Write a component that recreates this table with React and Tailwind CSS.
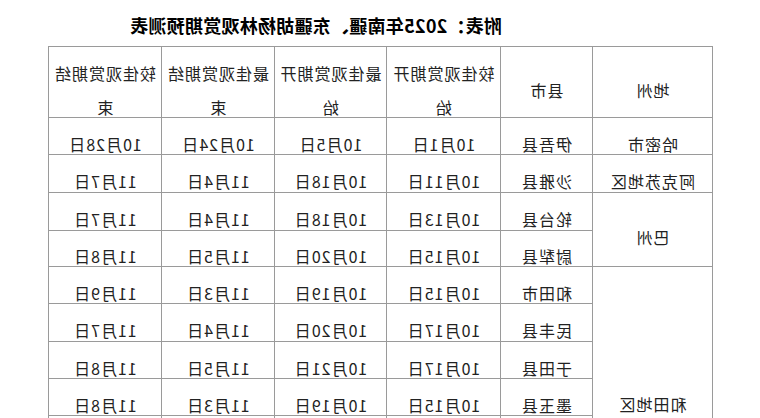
import React from "react";

const FONT = { fontFamily: '"Noto Sans CJK SC", "Noto Sans", sans-serif' };

const rows = [
  ["哈密市", "伊吾县", "10月1日", "10月5日", "10月24日", "10月28日"],
  ["阿克苏地区", "沙雅县", "10月11日", "10月18日", "11月4日", "11月7日"],
  ["巴州", "轮台县", "10月13日", "10月18日", "11月4日", "11月7日"],
  [null, "尉犁县", "10月15日", "10月20日", "11月5日", "11月8日"],
  ["和田地区", "和田市", "10月15日", "10月19日", "11月3日", "11月9日"],
  [null, "民丰县", "10月17日", "10月20日", "11月4日", "11月7日"],
  [null, "于田县", "10月17日", "10月21日", "11月5日", "11月8日"],
  [null, "墨玉县", "10月15日", "10月19日", "11月3日", "11月8日"],
  [null, "洛浦县", "10月15日", "10月19日", "11月3日", "11月8日"],
  [null, "策勒县", "10月16日", "10月20日", "11月4日", "11月8日"],
  [null, "皮山县", "10月16日", "10月20日", "11月4日", "11月8日"],
];

const spans = { 巴州: "row-span-2", 和田地区: "row-span-7" };

const cell =
  "flex items-center justify-center text-center border-r border-b border-[#9a9a9a] whitespace-nowrap";

export default function App() {
  return (
    <div
      className="w-[760px] h-[418px] overflow-hidden bg-white text-[#222] -scale-x-100"
      style={FONT}
    >
      <div className="h-[46px] pl-[258px] pt-[15px] text-[18px] leading-[20px] font-bold tracking-[0.25px] text-black whitespace-nowrap">
        附表：2025年南疆、东疆胡杨林观赏期预测表
      </div>
      <div className="ml-[47px] w-fit grid grid-cols-[120px_92px_114px_112px_113px_113px] grid-rows-[71px_37px_38px_38px_36px_37px_38px_37px_37px_37px_37px_37px] border-l border-t border-[#9a9a9a] text-[16px] tracking-[1px]">
        <div className={`${cell} pt-[16px] leading-[34px]`}>地州</div>
        <div className={`${cell} pt-[16px] leading-[34px]`}>县市</div>
        <div className={`${cell} pt-[16px] leading-[34px]`}>
          <span>
            较佳观赏期开
            <br />
            始
          </span>
        </div>
        <div className={`${cell} pt-[16px] leading-[34px]`}>
          <span>
            最佳观赏期开
            <br />
            始
          </span>
        </div>
        <div className={`${cell} pt-[16px] leading-[34px]`}>
          <span>
            最佳观赏期结
            <br />
            束
          </span>
        </div>
        <div className={`${cell} pt-[16px] leading-[34px]`}>
          <span>
            较佳观赏期结
            <br />
            束
          </span>
        </div>
        {rows.map((r, i) =>
          r.map((v, j) => {
            if (v === null) return null;
            const span = j === 0 && spans[v] ? spans[v] : "";
            return (
              <div
                key={`${i}-${j}`}
                className={`${cell} ${span} pt-[15px] leading-[20px]`}
              >
                {v}
              </div>
            );
          })
        )}
      </div>
    </div>
  );
}
